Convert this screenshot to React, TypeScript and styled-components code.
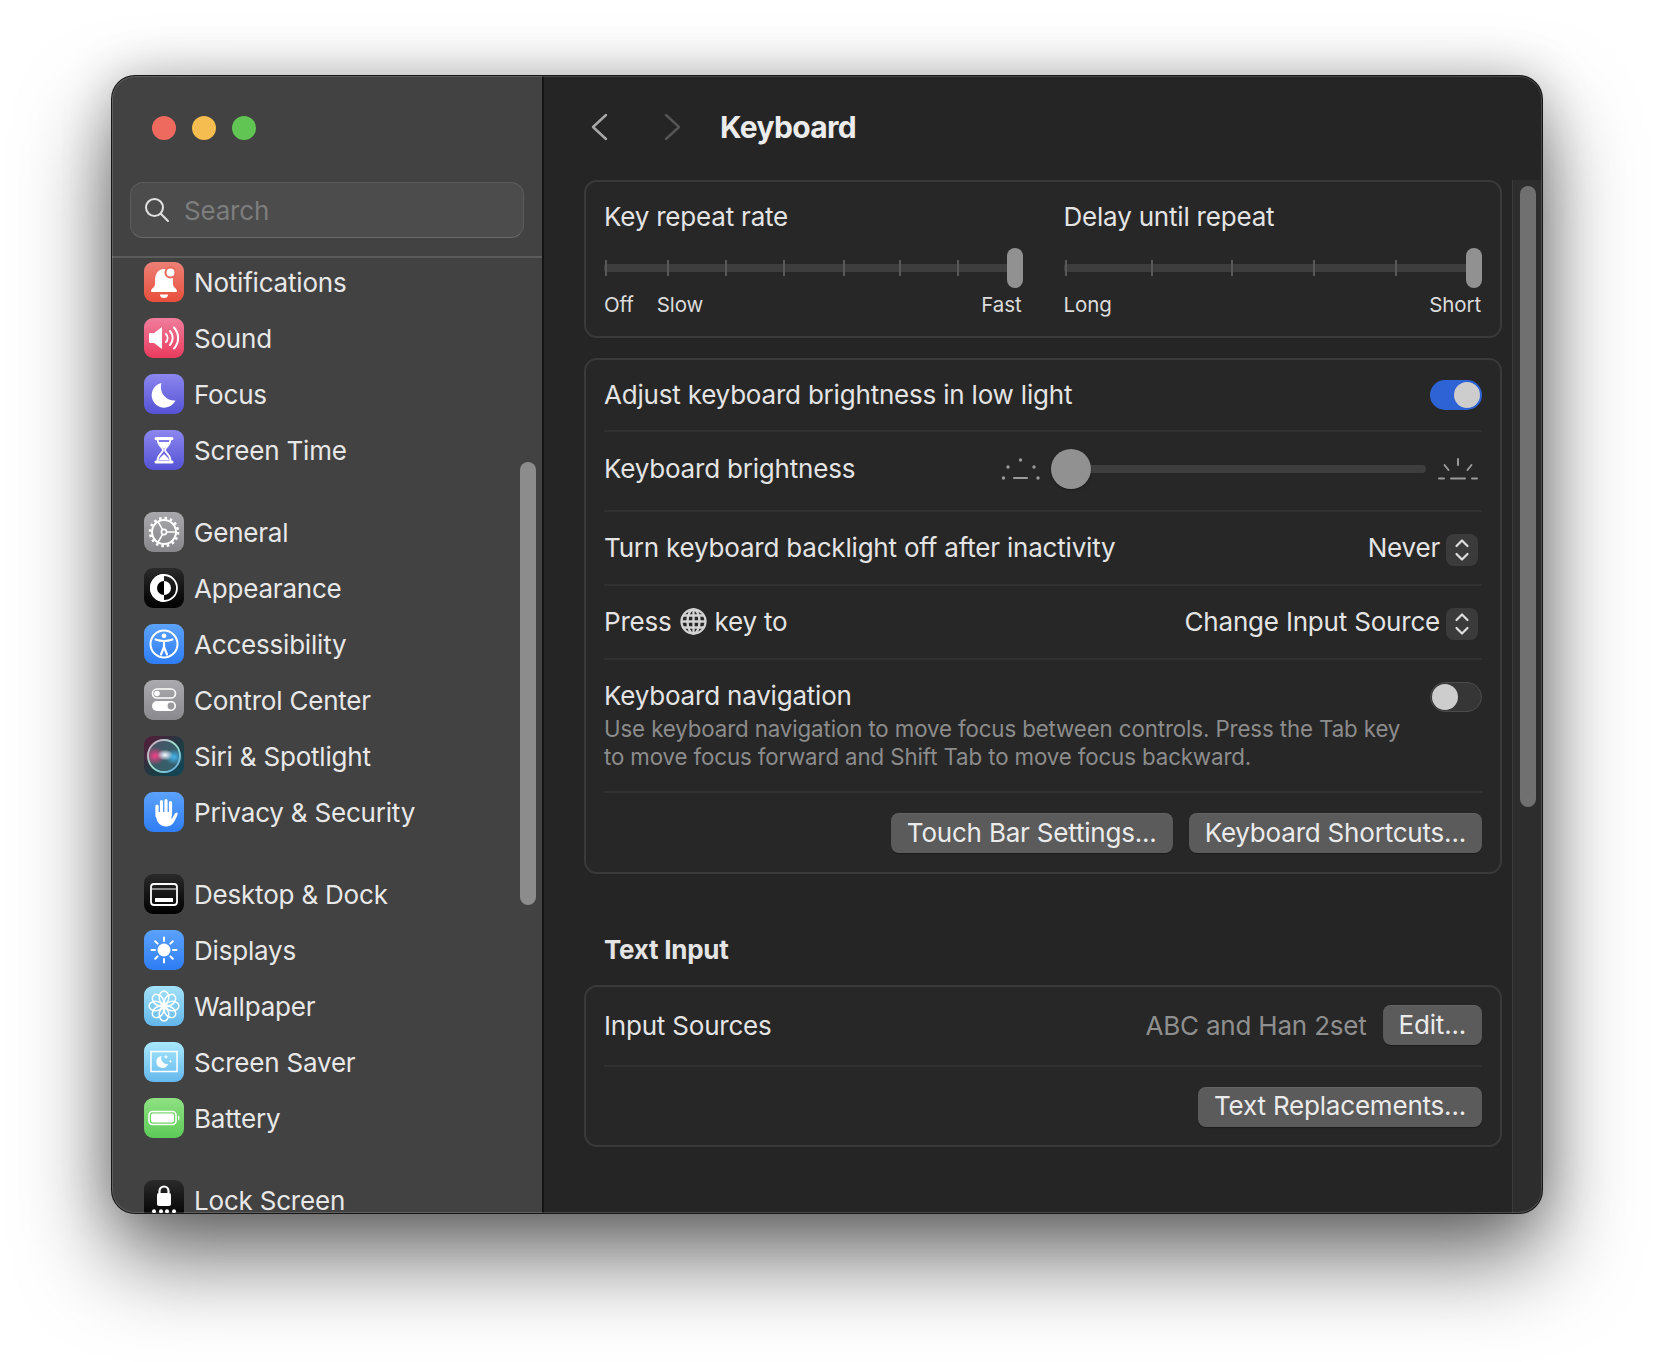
import React from "react";
import styled, { createGlobalStyle } from "styled-components";

const FONT = `Inter, "Noto Sans", "Liberation Sans", sans-serif`;

const Global = createGlobalStyle`
  html, body { margin: 0; padding: 0; background: #fff; }
  body { font-family: ${FONT}; -webkit-font-smoothing: antialiased; }
  * { box-sizing: border-box; }
`;

const Stage = styled.div`
  width: 1654px;
  height: 1362px;
  padding: 76px 0 0 112px;
  overflow: hidden;
`;

const Window = styled.div`
  position: relative;
  width: 1430px;
  height: 1137px;
  display: flex;
  border-radius: 23px;
  overflow: hidden;
  background: #252525;
  box-shadow: 0 0 0 1px #161616, 0 44px 90px rgba(0, 0, 0, 0.58), 0 0 50px rgba(0, 0, 0, 0.22);
  &::after {
    content: "";
    position: absolute;
    inset: 0;
    border-radius: 23px;
    box-shadow: inset 0 0 0 1px rgba(255, 255, 255, 0.16);
    pointer-events: none;
  }
`;

const Sidebar = styled.aside`
  position: relative;
  width: 432px;
  flex: none;
  display: flex;
  flex-direction: column;
  background: #424242;
  border-right: 2px solid #141414;
  overflow: hidden;
`;

const Lights = styled.div`
  display: flex;
  gap: 16px;
  padding: 40px 0 0 40px;
`;

const Light = styled.span<{ $c: string }>`
  width: 24px;
  height: 24px;
  border-radius: 50%;
  background: ${(p) => p.$c};
`;

const SearchBox = styled.div`
  margin: 42px 18px 0;
  height: 56px;
  flex: none;
  display: flex;
  align-items: center;
  gap: 14px;
  padding-left: 13px;
  border-radius: 13px;
  background: #4c4c4c;
  border: 1.5px solid #5c5c5c;
  border-bottom-color: #6a6a6a;
`;

const SearchText = styled.span`
  font-size: 26px;
  color: #7d7d7d;
  letter-spacing: -0.2px;
`;

const Separator = styled.div`
  height: 2px;
  flex: none;
  margin-top: 18px;
  background: #5b5b5b;
`;

const NavList = styled.nav`
  flex: 1;
  min-height: 0;
  display: flex;
  flex-direction: column;
  gap: 42px;
  padding: 4px 0 0 32px;
`;

const NavGroup = styled.div`
  display: flex;
  flex-direction: column;
  gap: 16px;
`;

const NavRow = styled.div`
  display: flex;
  align-items: center;
  gap: 10px;
  height: 40px;
  flex: none;
`;

const NavLabel = styled.span`
  font-size: 26px;
  color: #e8e8e8;
  letter-spacing: -0.2px;
  white-space: nowrap;
`;

const IconBox = styled.span<{ $bg: string }>`
  width: 40px;
  height: 40px;
  flex: none;
  border-radius: 9px;
  background: ${(p) => p.$bg};
  overflow: hidden;
  display: block;
  svg { display: block; width: 40px; height: 40px; }
`;

const SideThumb = styled.div`
  position: absolute;
  top: 386px;
  left: 408px;
  width: 16px;
  height: 443px;
  border-radius: 8px;
  background: #8c8c8c;
`;

const Main = styled.main`
  flex: 1;
  min-width: 0;
  display: flex;
  flex-direction: column;
`;

const TitleBar = styled.header`
  height: 104px;
  flex: none;
  display: flex;
  align-items: center;
  padding: 0 0 3px 46px;
`;

const NavChevron = styled.svg`
  width: 18px;
  height: 28px;
  flex: none;
`;

const ForwardSlot = styled.span`
  display: flex;
  margin: 0 38px 0 56px;
`;

const Title = styled.h1`
  margin: 0;
  font-size: 30px;
  font-weight: 700;
  color: #ececec;
  letter-spacing: -0.65px;
`;

const Body = styled.div`
  flex: 1;
  min-height: 0;
  display: flex;
`;

const Content = styled.div`
  flex: 1;
  min-width: 0;
  padding: 0 10px 0 40px;
  overflow: hidden;
  display: flex;
  flex-direction: column;
`;

const Track = styled.div`
  width: 30px;
  flex: none;
  padding: 6px 6px 0 7px;
  background: #2d2d2d;
  border-left: 1px solid #3b3b3b;
`;

const Thumb = styled.div`
  height: 621px;
  border-radius: 8px;
  background: #707070;
`;

const Card = styled.section<{ $mt?: number }>`
  flex: none;
  margin-top: ${(p) => p.$mt ?? 0}px;
  border: 2px solid #3a3a3a;
  border-radius: 13px;
  background: #272727;
  padding: 0 18px;
`;

const RepeatCard = styled(Card)`
  height: 158px;
  display: flex;
  gap: 41px;
`;

const RepeatCol = styled.div`
  flex: 1;
  min-width: 0;
  display: flex;
  flex-direction: column;
`;

const RepeatTitle = styled.div`
  height: 35px;
  margin-top: 17px;
  display: flex;
  align-items: center;
  font-size: 26px;
  color: #e4e4e4;
  letter-spacing: -0.2px;
`;

const StepSlider = styled.div`
  position: relative;
  height: 40px;
  margin-top: 14px;
  display: flex;
  align-items: center;
`;

const StepTrack = styled.div`
  flex: 1;
  height: 8px;
  background: #3e3e3e;
  border-radius: 2px;
`;

const Tick = styled.span`
  position: absolute;
  top: 12px;
  width: 2px;
  height: 16px;
  background: #585858;
`;

const StepThumb = styled.span`
  position: absolute;
  top: 0;
  right: 0;
  width: 16px;
  height: 40px;
  border-radius: 8px;
  background: #919191;
`;

const ScaleLabels = styled.div`
  margin-top: 4px;
  padding-right: 1px;
  display: flex;
  gap: 23px;
  font-size: 20.5px;
  line-height: 26px;
  color: #dcdcdc;
  letter-spacing: -0.1px;
`;

const PushRight = styled.span`
  margin-left: auto;
`;

const Row = styled.div<{ $h: number; $top?: boolean; $pb?: number }>`
  height: ${(p) => p.$h}px;
  padding-bottom: ${(p) => p.$pb ?? 0}px;
  display: flex;
  align-items: ${(p) => (p.$top ? "flex-start" : "center")};
  justify-content: space-between;
  & + & { border-top: 2px solid #313131; }
`;

const RowLabel = styled.span`
  display: inline-flex;
  align-items: center;
  gap: 8px;
  padding-bottom: 2px;
  font-size: 26px;
  color: #e4e4e4;
  letter-spacing: -0.2px;
  white-space: nowrap;
`;

const Toggle = styled.span<{ $on?: boolean }>`
  position: relative;
  display: block;
  width: 52px;
  height: 30px;
  flex: none;
  border-radius: 15px;
  background: ${(p) => (p.$on ? "#2e63d6" : "#363636")};
  border: ${(p) => (p.$on ? "none" : "1.5px solid #4b4b4b")};
  &::after {
    content: "";
    position: absolute;
    top: ${(p) => (p.$on ? "2px" : "0.5px")};
    ${(p) => (p.$on ? "right: 2px;" : "left: 0.5px;")}
    width: 26px;
    height: 26px;
    border-radius: 50%;
    background: #cdcdcd;
  }
`;

const BrightnessGroup = styled.div`
  display: flex;
  align-items: center;
  width: 477px;
  margin-right: 4px;
`;

const BrightnessSvg = styled.svg`
  width: 40px;
  height: 24px;
  flex: none;
`;

const BrightnessSlider = styled.div`
  position: relative;
  flex: 1;
  height: 40px;
  margin: 0 12px 0 10px;
  display: flex;
  align-items: center;
`;

const BrightnessTrack = styled.div`
  flex: 1;
  height: 8px;
  border-radius: 4px;
  background: #3e3e3e;
`;

const RoundThumb = styled.span`
  position: absolute;
  left: 0;
  top: 0;
  width: 40px;
  height: 40px;
  border-radius: 50%;
  background: #919191;
  box-shadow: 0 1px 2px rgba(0, 0, 0, 0.35);
`;

const SelectWrap = styled.div`
  display: flex;
  align-items: center;
  gap: 6px;
  margin: 4px 4px 0 0;
  font-size: 26px;
  color: #e4e4e4;
  letter-spacing: -0.2px;
`;

const SelectText = styled.span`
  padding-bottom: 5px;
`;

const Stepper = styled.span`
  width: 32px;
  height: 32px;
  border-radius: 8px;
  background: #3b3b3b;
  display: flex;
  align-items: center;
  justify-content: center;
`;

const NavText = styled.div`
  margin-top: 20px;
  display: flex;
  flex-direction: column;
`;

const Hint = styled.p`
  margin: 2px 0 0;
  font-size: 22.3px;
  line-height: 28px;
  color: #8c8c8c;
  letter-spacing: -0.12px;
  white-space: pre-line;
`;

const ToggleSlot = styled.span`
  display: block;
  margin-top: 22px;
`;

const ButtonBar = styled.div`
  display: flex;
  justify-content: flex-end;
  gap: 16px;
  align-items: center;
  height: 100%;
  width: 100%;
  padding-top: 1px;
`;

const PushButton = styled.button`
  height: 40px;
  padding: 0 16px 2px;
  border: none;
  border-radius: 8px;
  background: #5b5b5b;
  color: #ebebeb;
  font: 400 26px ${FONT};
  letter-spacing: -0.2px;
  box-shadow: 0 1px 1px rgba(0, 0, 0, 0.3), inset 0 1px 0 rgba(255, 255, 255, 0.06);
`;

const SectionHead = styled.h2<{ $mt: number }>`
  margin: ${(p) => p.$mt}px 0 0 20px;
  height: 30px;
  line-height: 30px;
  flex: none;
  font-size: 26px;
  font-weight: 700;
  color: #e4e4e4;
  letter-spacing: -0.25px;
`;

const Value = styled.div`
  display: flex;
  align-items: center;
  gap: 16px;
  margin-bottom: 2px;
  font-size: 26px;
  color: #8f8f8f;
  letter-spacing: -0.2px;
`;

const W = "#fff";

const Bell = () => (
  <svg viewBox="0 0 40 40">
    <path d="M20 7c-6 0-9 5-9 11v4c0 3-3 4-4 6.500 0 1 .5 1.500 1.500 1.500h23c1 0 1.500-.5 1.500-1.500-1-2.500-4-3.500-4-6.500v-4c0-6-3-11-9-11z" fill={W} />
    <path d="M16 32.500h8a4 3.500 0 0 1-8 0z" fill={W} />
    <circle cx="26.500" cy="10.500" r="6" fill="#ea6a5c" />
    <circle cx="26.500" cy="10.500" r="4" fill={W} />
  </svg>
);
const Speaker = () => (
  <svg viewBox="0 0 40 40" fill="none" stroke={W} strokeLinecap="round">
    <path d="M5 16.500c0-.8.5-1.500 1.500-1.500H10l8-6v22l-8-6H6.500C5.500 25 5 24.300 5 23.500z" fill={W} stroke="none" />
    <path d="M22 16a6 6 0 0 1 0 8" strokeWidth="2" />
    <path d="M26 13a10.500 10.500 0 0 1 0 14" strokeWidth="2" />
    <path d="M30 9.500a15.500 15.500 0 0 1 0 21" strokeWidth="2" />
  </svg>
);
const Moon = () => (
  <svg viewBox="0 0 40 40">
    <path d="M17.500 9A12.500 12.500 0 1 0 31.500 26.500 13.500 13.500 0 0 1 17.500 9z" fill={W} />
  </svg>
);
const Hourglass = () => (
  <svg viewBox="0 0 40 40" fill="none" stroke={W} strokeWidth="1.800">
    <path d="M12 8.500h16M12 32h16" strokeWidth="3" strokeLinecap="round" />
    <path d="M13.500 9c0 7 5.500 8 5.500 11s-5.500 4-5.500 11M26.500 9c0 7-5.500 8-5.500 11s5.500 4 5.500 11" />
    <path d="M14.500 12h11c-1 3.500-4 5-5.500 7-1.500-2-4.500-3.500-5.500-7zM15 30c.7-3 3.500-4 5-6 1.500 2 4.300 3 5 6z" fill={W} stroke="none" />
  </svg>
);
const Gear = () => (
  <svg viewBox="0 0 40 40" fill="none" stroke={W}>
    <circle cx="20" cy="20" r="12" strokeWidth="2" />
    <circle cx="20" cy="20" r="14" strokeWidth="2.500" strokeDasharray="2.600 2.900" />
    <circle cx="20" cy="20" r="2.600" strokeWidth="1.600" />
    <path d="M22.600 20H32M18.700 17.800 14 9.600M18.700 22.200 14 30.400" strokeWidth="1.600" />
  </svg>
);
const Appearance = () => (
  <svg viewBox="0 0 40 40" fill="none">
    <path d="M20 6a14 14 0 0 0 0 28z" fill={W} />
    <circle cx="20" cy="20" r="13" stroke={W} strokeWidth="1.800" />
    <path d="M20 13a7 7 0 0 0 0 14z" fill="#000" />
    <path d="M20 13a7 7 0 0 1 0 14z" fill={W} />
  </svg>
);
const Access = () => (
  <svg viewBox="0 0 40 40" fill="none" stroke={W}>
    <circle cx="20" cy="20" r="13.500" strokeWidth="2" />
    <circle cx="20" cy="11.800" r="2.400" fill={W} stroke="none" />
    <path d="M11.500 15.500c3 1 5.500 1.500 8.500 1.500s5.500-.5 8.500-1.500" strokeWidth="2" strokeLinecap="round" />
    <path d="M20 17v6M20 23l-3 7.500M20 23l3 7.500" strokeWidth="2.200" strokeLinecap="round" />
  </svg>
);
const Switches = () => (
  <svg viewBox="0 0 40 40" fill="none">
    <rect x="8.500" y="9" width="23" height="9" rx="4.500" stroke={W} strokeWidth="1.600" />
    <circle cx="13" cy="13.500" r="2.800" fill={W} />
    <rect x="8" y="21" width="24" height="10" rx="5" fill={W} />
    <circle cx="27" cy="26" r="3.400" fill="#9a9a9e" />
  </svg>
);
const Siri = () => (
  <svg viewBox="0 0 40 40" fill="none">
    <defs>
      <radialGradient id="siriBlue" cx="0.5" cy="0.5" r="0.5">
        <stop offset="0" stopColor="#45b4f0" />
        <stop offset="1" stopColor="#45b4f0" stopOpacity="0" />
      </radialGradient>
      <radialGradient id="siriPink" cx="0.5" cy="0.5" r="0.5">
        <stop offset="0" stopColor="#f43f86" />
        <stop offset="1" stopColor="#f43f86" stopOpacity="0" />
      </radialGradient>
      <radialGradient id="siriWhite" cx="0.5" cy="0.5" r="0.5">
        <stop offset="0" stopColor="#fff" />
        <stop offset="0.4" stopColor="#e6efff" stopOpacity="0.7" />
        <stop offset="1" stopColor="#fff" stopOpacity="0" />
      </radialGradient>
      <linearGradient id="siriRing" x1="0" y1="0" x2="1" y2="1">
        <stop offset="0" stopColor="#d8a0c0" />
        <stop offset="0.5" stopColor="#a0e4d0" />
        <stop offset="1" stopColor="#5aa4e0" />
      </linearGradient>
    </defs>
    <circle cx="20" cy="20" r="17" fill="#4f7a86" fillOpacity="0.55" />
    <ellipse cx="11" cy="20" rx="10" ry="9" fill="url(#siriPink)" />
    <ellipse cx="30" cy="21" rx="9" ry="8" fill="url(#siriBlue)" />
    <ellipse cx="21" cy="19" rx="8" ry="5.500" fill="url(#siriWhite)" />
    <circle cx="20" cy="20" r="16" stroke="url(#siriRing)" strokeWidth="1.800" />
  </svg>
);
const Hand = () => (
  <svg viewBox="0 0 40 40" fill="none" stroke={W} strokeLinecap="round">
    <path d="M13 14v10M17.500 9.500V22M22 8.500V22M26.500 10.500V23" strokeWidth="3.200" />
    <path d="M12 20h15.500v7c2-2 2.800-6 5-6.500 1-.2 1.500.8 1 2-1 3-3 7-5 9.500-1.500 1.500-3.500 2.500-6 2.500-4 0-7-1.500-9-5-1-2-1.500-5-1.500-9.500z" fill={W} stroke="none" />
  </svg>
);
const Dock = () => (
  <svg viewBox="0 0 40 40" fill="none">
    <rect x="7" y="10" width="26" height="21" rx="3" stroke={W} strokeWidth="1.800" />
    <path d="M8 15h24" stroke={W} strokeWidth="1" />
    <rect x="11" y="24" width="18" height="4" rx="0.500" fill={W} />
  </svg>
);
const Sun = () => (
  <svg viewBox="0 0 40 40" fill="none" stroke={W} strokeWidth="2" strokeLinecap="round">
    <circle cx="20" cy="20" r="6.500" fill={W} stroke="none" />
    <path d="M20 7.500v3.500M20 29v3.500M7.500 20H11M29 20h3.500M11.200 11.200l2.400 2.400M26.400 26.400l2.400 2.400M11.200 28.800l2.400-2.400M26.400 13.600l2.400-2.400" />
  </svg>
);
const Flower = () => (
  <svg viewBox="0 0 40 40" fill="none" stroke={W} strokeWidth="1.500">
    {[0, 45, 90, 135, 180, 225, 270, 315].map((a) => (
      <ellipse key={a} cx="20" cy="11.500" rx="4.800" ry="6.400" transform={`rotate(${a} 20 20)`} />
    ))}
    <circle cx="20" cy="20" r="2.500" fill={W} stroke="none" />
  </svg>
);
const Saver = () => (
  <svg viewBox="0 0 40 40" fill="none">
    <rect x="7" y="9.500" width="26" height="20" stroke={W} strokeWidth="1.500" />
    <path d="M17.500 14a6 6 0 1 0 6.500 8 6 6 0 0 1-6.500-8z" fill={W} />
    <path d="M22 12.500l.6 1.800 1.800.6-1.800.6-.6 1.800-.6-1.800-1.800-.6 1.800-.6zM26.500 17.500l.5 1.200 1.200.5-1.200.5-.5 1.200-.5-1.200-1.200-.5 1.200-.5z" fill={W} />
  </svg>
);
const BatteryIcon = () => (
  <svg viewBox="0 0 40 40" fill="none">
    <rect x="5" y="13.500" width="27" height="13" rx="3.500" stroke={W} strokeWidth="1.500" />
    <rect x="7" y="15.500" width="23" height="9" rx="2" fill={W} />
    <path d="M34 17.500c1.200.5 1.500 1.500 1.500 2.500s-.3 2-1.500 2.500z" fill={W} />
  </svg>
);
const LockIcon = () => (
  <svg viewBox="0 0 40 40" fill="none">
    <path d="M15.500 14v-3a4.500 4.500 0 0 1 9 0v3" stroke={W} strokeWidth="2.200" />
    <rect x="13" y="13" width="14" height="13" rx="2" fill={W} />
    {[10, 17, 23, 30].map((x) => (
      <circle key={x} cx={x} cy="31.300" r="2" fill={W} />
    ))}
  </svg>
);

const g = (a: string, b: string) => `linear-gradient(180deg, ${a}, ${b})`;

type Item = { label: string; bg: string; icon: React.ReactNode };

const groups: Item[][] = [
  [
    { label: "Notifications", bg: g("#ec8076", "#e94f3c"), icon: <Bell /> },
    { label: "Sound", bg: g("#f07d9c", "#ea3b5e"), icon: <Speaker /> },
    { label: "Focus", bg: g("#8c86ef", "#5553d4"), icon: <Moon /> },
    { label: "Screen Time", bg: g("#8c86ef", "#5553d4"), icon: <Hourglass /> },
  ],
  [
    { label: "General", bg: g("#a8a8ac", "#88888c"), icon: <Gear /> },
    { label: "Appearance", bg: g("#2a2a2a", "#000"), icon: <Appearance /> },
    { label: "Accessibility", bg: g("#5ba2fb", "#2f7df5"), icon: <Access /> },
    { label: "Control Center", bg: g("#ababaf", "#8a8a8e"), icon: <Switches /> },
    { label: "Siri & Spotlight", bg: "linear-gradient(135deg, #5a1a3a, #1e3a40 55%, #10485a)", icon: <Siri /> },
    { label: "Privacy & Security", bg: g("#5ba2fb", "#2f7df5"), icon: <Hand /> },
  ],
  [
    { label: "Desktop & Dock", bg: g("#2a2a2a", "#000"), icon: <Dock /> },
    { label: "Displays", bg: g("#5ba2fb", "#2f7df5"), icon: <Sun /> },
    { label: "Wallpaper", bg: g("#a2e2fa", "#62b6ea"), icon: <Flower /> },
    { label: "Screen Saver", bg: g("#a8e8fd", "#64b8ec"), icon: <Saver /> },
    { label: "Battery", bg: g("#8fe082", "#5ccb58"), icon: <BatteryIcon /> },
  ],
  [{ label: "Lock Screen", bg: g("#2a2a2a", "#000"), icon: <LockIcon /> }],
];

const Updown = () => (
  <svg width="16" height="24" viewBox="0 0 16 24" fill="none" stroke="#dedede" strokeWidth="2.200" strokeLinecap="round" strokeLinejoin="round">
    <path d="M2.500 8 8 2.500 13.500 8M2.500 16 8 21.500 13.500 16" />
  </svg>
);

const Globe = () => (
  <svg width="27" height="27" viewBox="0 0 27 27" fill="none" stroke="#d4d4d4" strokeWidth="2.300">
    <circle cx="13.500" cy="13.500" r="12" />
    <ellipse cx="13.500" cy="13.500" rx="6" ry="12" />
    <path d="M13.500 1.500v24M1.500 13.500h24M3.500 7.500h20M3.500 19.500h20" />
  </svg>
);

const Chevron = ({ dir, color }: { dir: "l" | "r"; color: string }) => (
  <NavChevron viewBox="0 0 18 28" fill="none" stroke={color} strokeWidth="2.400" strokeLinecap="round" strokeLinejoin="round">
    <path d={dir === "l" ? "M16 2 3 14l13 12" : "M2 2l13 12L2 26"} />
  </NavChevron>
);

const StepControl = ({ ticks }: { ticks: number[] }) => (
  <StepSlider>
    <StepTrack />
    {ticks.map((t) => (
      <Tick key={t} style={{ left: t }} />
    ))}
    <StepThumb />
  </StepSlider>
);

export default function App() {
  return (
    <Stage>
      <Global />
      <Window>
        <Sidebar>
          <Lights>
            <Light $c="#ee6a5f" />
            <Light $c="#f5bd4f" />
            <Light $c="#61c554" />
          </Lights>
          <SearchBox>
            <svg width="26" height="26" viewBox="0 0 26 26" fill="none" stroke="#e2e2e2" strokeWidth="2" strokeLinecap="round">
              <circle cx="10.500" cy="10.500" r="8.500" />
              <path d="M16.800 16.800 24 24" />
            </svg>
            <SearchText>Search</SearchText>
          </SearchBox>
          <Separator />
          <NavList>
            {groups.map((items, i) => (
              <NavGroup key={i}>
                {items.map((it) => (
                  <NavRow key={it.label}>
                    <IconBox $bg={it.bg}>{it.icon}</IconBox>
                    <NavLabel>{it.label}</NavLabel>
                  </NavRow>
                ))}
              </NavGroup>
            ))}
          </NavList>
          <SideThumb />
        </Sidebar>
        <Main>
          <TitleBar>
            <Chevron dir="l" color="#a8a8a8" />
            <ForwardSlot>
              <Chevron dir="r" color="#555" />
            </ForwardSlot>
            <Title>Keyboard</Title>
          </TitleBar>
          <Body>
            <Content>
              <RepeatCard>
                <RepeatCol>
                  <RepeatTitle>Key repeat rate</RepeatTitle>
                  <StepControl ticks={[1, 63, 121, 179, 239, 295, 353]} />
                  <ScaleLabels>
                    <span>Off</span>
                    <span>Slow</span>
                    <PushRight>Fast</PushRight>
                  </ScaleLabels>
                </RepeatCol>
                <RepeatCol>
                  <RepeatTitle>Delay until repeat</RepeatTitle>
                  <StepControl ticks={[1, 87, 167, 249, 331]} />
                  <ScaleLabels>
                    <span>Long</span>
                    <PushRight>Short</PushRight>
                  </ScaleLabels>
                </RepeatCol>
              </RepeatCard>

              <Card $mt={20}>
                <Row $h={70}>
                  <RowLabel>Adjust keyboard brightness in low light</RowLabel>
                  <Toggle $on />
                </Row>
                <Row $h={80} $pb={4}>
                  <RowLabel>Keyboard brightness</RowLabel>
                  <BrightnessGroup>
                    <BrightnessSvg viewBox="0 0 40 24" fill="#9a9a9a">
                      <circle cx="19.500" cy="3" r="1.700" />
                      <circle cx="7" cy="10" r="1.700" />
                      <circle cx="33" cy="10" r="1.700" />
                      <circle cx="2.500" cy="21" r="1.700" />
                      <circle cx="37" cy="21" r="1.700" />
                      <rect x="12" y="20" width="15" height="2" rx="1" />
                    </BrightnessSvg>
                    <BrightnessSlider>
                      <BrightnessTrack />
                      <RoundThumb />
                    </BrightnessSlider>
                    <BrightnessSvg viewBox="0 0 40 24" fill="none" stroke="#9a9a9a" strokeWidth="2" strokeLinecap="round">
                      <path d="M20 2v6M6.500 8l4 5M33.500 8l-4 5M1 21.500h5M13 21.500h14M34 21.500h5" />
                    </BrightnessSvg>
                  </BrightnessGroup>
                </Row>
                <Row $h={74}>
                  <RowLabel>Turn keyboard backlight off after inactivity</RowLabel>
                  <SelectWrap>
                    <SelectText>Never</SelectText>
                    <Stepper>
                      <Updown />
                    </Stepper>
                  </SelectWrap>
                </Row>
                <Row $h={74}>
                  <RowLabel>
                    Press <Globe /> key to
                  </RowLabel>
                  <SelectWrap>
                    <SelectText>Change Input Source</SelectText>
                    <Stepper>
                      <Updown />
                    </Stepper>
                  </SelectWrap>
                </Row>
                <Row $h={133} $top>
                  <NavText>
                    <RowLabel>Keyboard navigation</RowLabel>
                    <Hint>
                      {"Use keyboard navigation to move focus between controls. Press the Tab key\nto move focus forward and Shift Tab to move focus backward."}
                    </Hint>
                  </NavText>
                  <ToggleSlot>
                    <Toggle />
                  </ToggleSlot>
                </Row>
                <Row $h={81}>
                  <ButtonBar>
                    <PushButton>Touch Bar Settings...</PushButton>
                    <PushButton>Keyboard Shortcuts...</PushButton>
                  </ButtonBar>
                </Row>
              </Card>

              <SectionHead $mt={61}>Text Input</SectionHead>
              <Card $mt={20}>
                <Row $h={78}>
                  <RowLabel>Input Sources</RowLabel>
                  <Value>
                    ABC and Han 2set
                    <PushButton>Edit...</PushButton>
                  </Value>
                </Row>
                <Row $h={80}>
                  <ButtonBar>
                    <PushButton>Text Replacements...</PushButton>
                  </ButtonBar>
                </Row>
              </Card>

              <SectionHead $mt={64}>Dictation</SectionHead>
            </Content>
            <Track>
              <Thumb />
            </Track>
          </Body>
        </Main>
      </Window>
    </Stage>
  );
}
